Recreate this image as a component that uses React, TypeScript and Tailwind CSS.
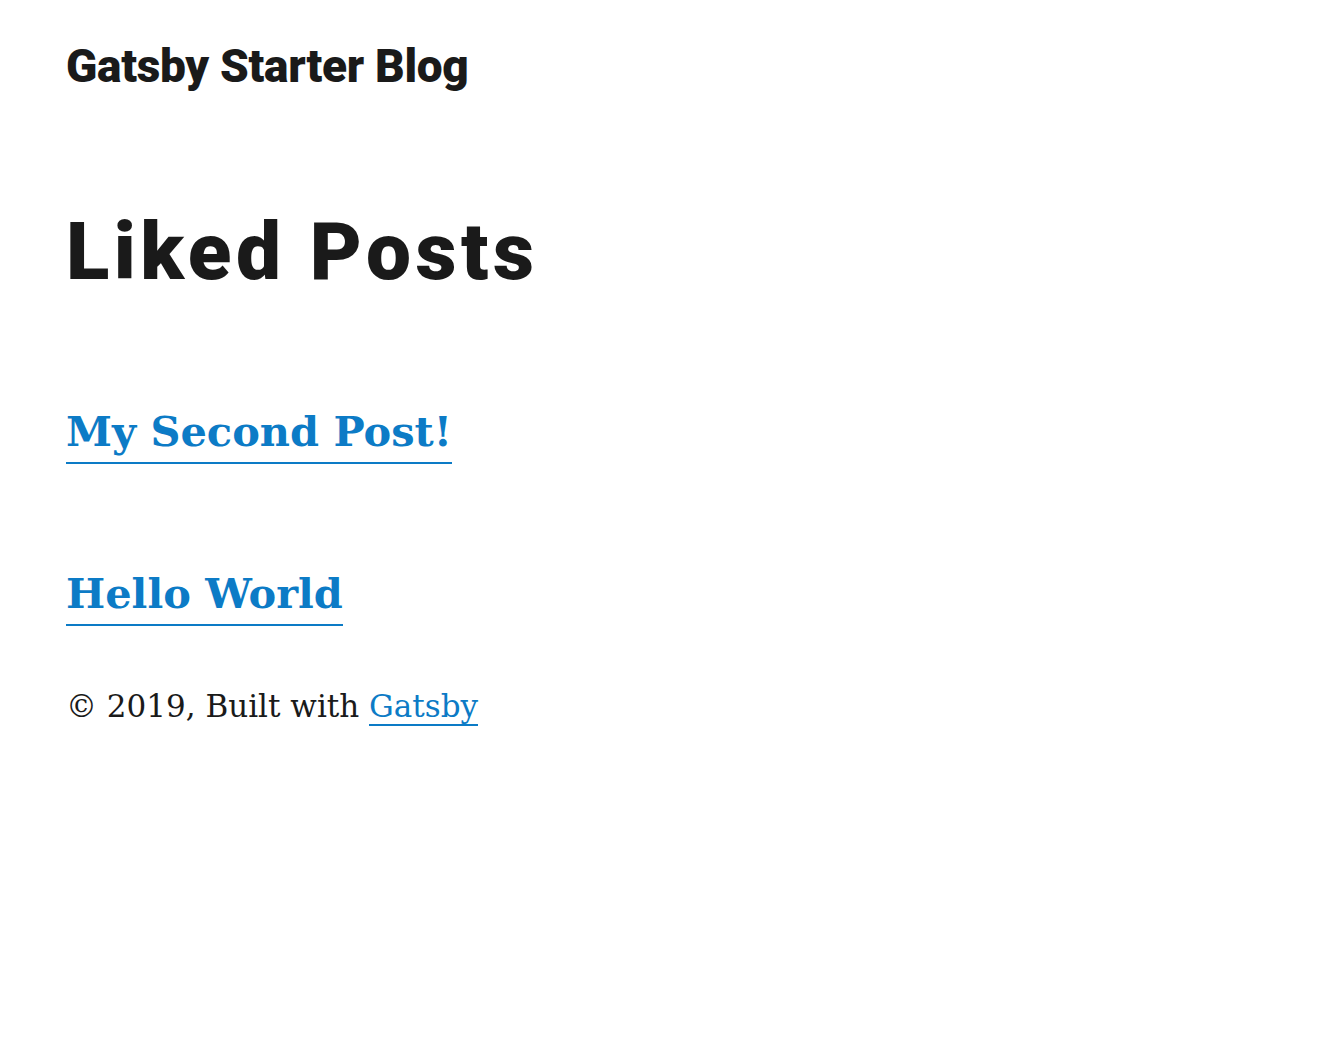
const posts = [
    { slug: "/my-second-post/", title: "My Second Post!" },
    { slug: "/hello-world/", title: "Hello World" },
]

const App = () => {
    return (
        <div className="min-h-screen bg-white text-[#1a1a1a]">
            <div className="pl-[66px] pt-[38px]">
                {/* Header */}
                <h3 className="font-['Roboto',sans-serif] font-black text-[46px] leading-[56px] tracking-[-0.3px]">
                    <a href="/" className="text-inherit no-underline">
                        Gatsby Starter Blog
                    </a>
                </h3>

                {/* Page title */}
                <h1 className="mt-[114px] font-['Roboto',sans-serif] font-black text-[80px] leading-[88px] tracking-[4.5px]">
                    Liked Posts
                </h1>

                {/* Posts */}
                <div className="mt-[110px] flex flex-col">
                    {posts.map((post, index) => (
                        <div key={post.slug} className={index === 0 ? "" : "mt-[110px]"}>
                            <h3 className="font-['DejaVu_Serif',serif] font-bold text-[41.5px] leading-[52px]">
                                <a
                                    href={post.slug}
                                    className="pb-[6px] text-[#0c7bc6] shadow-[0_2px_0_0_#0c7bc6] no-underline"
                                >
                                    {post.title}
                                </a>
                            </h3>
                        </div>
                    ))}
                </div>

                {/* Footer */}
                <footer className="mt-[64px] font-['DejaVu_Serif',serif] text-[31px] leading-[44px]">
                    © 2019, Built with{" "}
                    <a href="https://www.gatsbyjs.org" className="text-[#0c7bc6] shadow-[0_2px_0_0_#0c7bc6] no-underline">
                        Gatsby
                    </a>
                </footer>
            </div>
        </div>
    )
}

export default App
